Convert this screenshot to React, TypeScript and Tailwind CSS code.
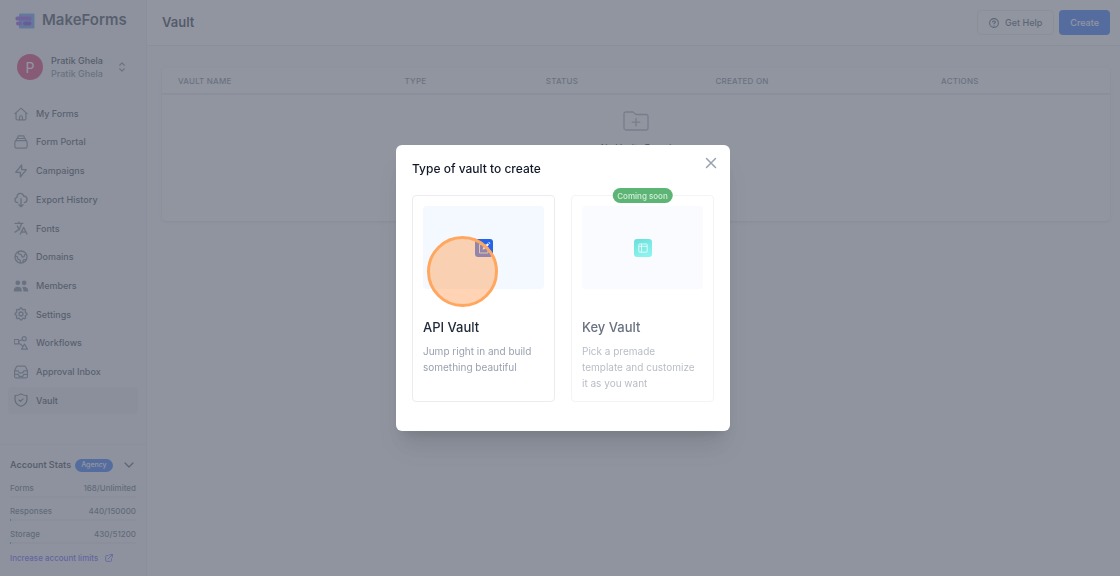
import type { ReactNode } from "react";
import {
  HiOutlineCloudDownload,
  HiOutlineCog,
  HiOutlineExternalLink,
  HiOutlineGlobe,
  HiOutlineLightningBolt,
  HiOutlineSelector,
  HiOutlineTranslate,
  HiUsers,
} from "react-icons/hi";

type StrokeIconProps = { className: string; width?: number; children: ReactNode };

function StrokeIcon({ className, width = 2, children }: StrokeIconProps) {
  return (
    <svg
      viewBox="0 0 24 24"
      fill="none"
      stroke="currentColor"
      strokeWidth={width}
      strokeLinecap="round"
      strokeLinejoin="round"
      className={className}
      aria-hidden="true"
    >
      {children}
    </svg>
  );
}

const navIcon = "size-[14px] shrink-0";
const heroIcon = "-m-px size-4 shrink-0";

const navItems: { label: string; icon: ReactNode; active?: boolean }[] = [
  {
    label: "My Forms",
    icon: (
      <StrokeIcon className={navIcon}>
        <path d="M1.500 11.500 12 2l10.500 9.500M3.500 10V20a2 2 0 0 0 2 2h13a2 2 0 0 0 2-2V10" />
        <path d="M9.500 22v-4.500a2.500 2.500 0 0 1 5 0V22" />
      </StrokeIcon>
    ),
  },
  {
    label: "Form Portal",
    icon: (
      <StrokeIcon className={navIcon}>
        <rect x="1.500" y="9.500" width="21" height="13" rx="3" />
        <path d="M3 10 5 6h14l2 4M6 6l1-4.500h10L18 6" />
      </StrokeIcon>
    ),
  },
  { label: "Campaigns", icon: <HiOutlineLightningBolt className={heroIcon} /> },
  { label: "Export History", icon: <HiOutlineCloudDownload className={heroIcon} /> },
  { label: "Fonts", icon: <HiOutlineTranslate className={heroIcon} /> },
  { label: "Domains", icon: <HiOutlineGlobe className={heroIcon} /> },
  { label: "Members", icon: <HiUsers className={heroIcon} /> },
  { label: "Settings", icon: <HiOutlineCog className={heroIcon} /> },
  {
    label: "Workflows",
    icon: (
      <StrokeIcon className={navIcon}>
        <rect x="0.500" y="6" width="7.500" height="7.500" />
        <circle cx="17.500" cy="4.500" r="3.500" />
        <path d="m8 9 6.500-3M8 12l7 5M18 14l5 8.500H13z" />
      </StrokeIcon>
    ),
  },
  {
    label: "Approval Inbox",
    icon: (
      <StrokeIcon className={navIcon}>
        <path d="M1 10h6l2 3.500h6l2-3.500h6M1 16h6l2 3.500h6l2-3.500h6" />
        <path d="M1 10v9.500a2.500 2.500 0 0 0 2.500 2.500h17a2.500 2.500 0 0 0 2.500-2.500V10l-3-6.500A2.500 2.500 0 0 0 17.700 2H6.300a2.500 2.500 0 0 0-2.300 1.500z" />
      </StrokeIcon>
    ),
  },
  {
    label: "Vault",
    active: true,
    icon: (
      <StrokeIcon className={navIcon}>
        <path d="M12 1.500C9 3.500 5.500 4.300 1.800 4.300V11c0 6 4.200 9.500 10.200 11.800C18 20.500 22.200 17 22.200 11V4.300C18.500 4.300 15 3.500 12 1.500z" />
        <path d="m8.500 12 2.500 2.500 4.500-4.500" />
      </StrokeIcon>
    ),
  },
];

const stats = [
  { label: "Forms", value: "168/Unlimited", percent: 0 },
  { label: "Responses", value: "440/150000", percent: 0.5 },
  { label: "Storage", value: "430/51200", percent: 1 },
];

function Logo() {
  return (
    <svg viewBox="0 0 20 16" className="h-4 w-5 shrink-0" aria-hidden="true">
      <rect x="4" y="0.500" width="15.500" height="15" rx="1" fill="#4f8df5" />
      <rect x="0.500" y="3.500" width="16" height="4" rx="1.500" fill="#7c3aed" />
      <rect x="1" y="8.500" width="6" height="4" rx="2" fill="#7c3aed" />
      <rect x="8" y="8.500" width="8.500" height="4" rx="2" fill="#5b21d6" />
    </svg>
  );
}

function Sidebar() {
  return (
    <aside className="flex w-[147px] shrink-0 flex-col border-r border-gray-200 bg-[#f3f4f6]">
      <div className="flex h-[41px] items-center gap-[7px] pl-[15px]">
        <Logo />
        <span className="text-[15px] font-semibold text-gray-800">MakeForms</span>
      </div>
      <button type="button" className="flex items-center pt-[13px] pr-[17px] pl-[17px] text-left">
        <span className="flex size-[26px] items-center justify-center rounded-full bg-[#db1a5a] text-[14px] text-white">
          P
        </span>
        <span className="ml-2 flex flex-1 flex-col text-[9px] leading-[13px] font-medium">
          <span className="text-gray-900">Pratik Ghela</span>
          <span className="text-gray-500">Pratik Ghela</span>
        </span>
        <HiOutlineSelector className="size-[14px] text-gray-500" />
      </button>
      <nav className="flex flex-1 flex-col justify-between px-2 pt-5 pb-[30px]">
        {navItems.map((item) => (
          <a
            key={item.label}
            href="#"
            className={
              item.active
                ? "flex h-[27px] items-center gap-2 rounded bg-[#e7e8eb] px-[6px] text-[9px] font-medium text-gray-900"
                : "flex h-[27px] items-center gap-2 rounded px-[6px] text-[9px] font-medium text-gray-800"
            }
          >
            <span className={item.active ? "text-gray-600" : "text-gray-500"}>{item.icon}</span>
            {item.label}
          </a>
        ))}
      </nav>
      <section className="border-t border-gray-200 px-[10px] pt-[11px] pb-3">
        <div className="flex h-[18px] items-center">
          <h2 className="text-[9px] font-semibold text-gray-800">Account Stats</h2>
          <span className="ml-1 flex h-[13px] items-center rounded-full bg-blue-600 px-[6px] text-[7px] font-medium text-white">
            Agency
          </span>
          <button type="button" aria-label="Toggle account stats" className="ml-auto pr-[1px]">
            <StrokeIcon className="size-3 text-gray-700" width={2.500}>
              <path d="m4 8 8 8 8-8" />
            </StrokeIcon>
          </button>
        </div>
        <div className="mt-2 flex flex-col gap-[7px]">
          {stats.map((stat) => (
            <div key={stat.label}>
              <div className="flex h-3 items-center justify-between text-[8px] font-medium text-gray-600">
                <span>{stat.label}</span>
                <span>{stat.value}</span>
              </div>
              <div className="mt-[2px] h-[2px] bg-gray-200">
                <div className="h-full bg-green-500" style={{ width: `${stat.percent}%` }} />
              </div>
            </div>
          ))}
        </div>
        <a href="#" className="mt-2 flex h-3 items-center gap-[6px] text-[8px] font-medium text-indigo-600">
          Increase account limits
          <HiOutlineExternalLink className="size-[10px]" />
        </a>
      </section>
    </aside>
  );
}

function VaultPage() {
  return (
    <div className="flex min-w-0 flex-1 flex-col bg-gray-50">
      <header className="flex h-[46px] items-center justify-between border-b border-gray-200 bg-white pr-[10px] pl-[15px]">
        <h1 className="text-[13px] font-semibold text-gray-900">Vault</h1>
        <div className="flex gap-[5px]">
          <button
            type="button"
            className="flex h-[25px] items-center gap-[6px] rounded border border-gray-200 bg-white px-[11px] text-[9px] font-medium text-gray-700"
          >
            <StrokeIcon className="size-[10px]" width={2.500}>
              <circle cx="12" cy="12" r="10.500" />
              <path d="M8.500 9.500C9 7.500 10.300 7 12 7c2 0 3.500 1 3.500 2.700 0 2.300-3.500 2.300-3.500 4.300M12 17.500v.1" />
            </StrokeIcon>
            Get Help
          </button>
          <button
            type="button"
            className="h-[25px] rounded bg-blue-600 px-[11px] text-[9px] font-medium text-white"
          >
            Create
          </button>
        </div>
      </header>
      <main className="pt-[22px] pr-[10px] pl-[15px]">
        <div className="overflow-hidden rounded bg-white shadow-sm">
          <table className="w-full table-fixed text-left">
            <thead>
              <tr className="h-[26px] border-b-2 border-gray-200 text-[8px] tracking-wide text-gray-500 uppercase">
                <th className="w-[23.9%] pl-4 font-medium">Vault name</th>
                <th className="w-[14.9%] pl-4 font-medium">Type</th>
                <th className="w-[17.9%] pl-4 font-medium">Status</th>
                <th className="w-[23.8%] pl-4 font-medium">Created on</th>
                <th className="pl-4 font-medium">Actions</th>
              </tr>
            </thead>
            <tbody>
              <tr>
                <td colSpan={5} className="h-[127px] pt-4 align-top">
                  <div className="flex flex-col items-center gap-[10px]">
                    <svg
                      viewBox="0 0 26 20"
                      fill="none"
                      stroke="currentColor"
                      strokeWidth="1.300"
                      strokeLinecap="round"
                      strokeLinejoin="round"
                      className="h-5 w-[26px] text-gray-400"
                      aria-hidden="true"
                    >
                      <path d="M1 3a2 2 0 0 1 2-2h7l3 2.500h10a2 2 0 0 1 2 2V17a2 2 0 0 1-2 2H3a2 2 0 0 1-2-2zM13 7.500v7.500M9.200 11.200h7.600" />
                    </svg>
                    <p className="text-[9px] font-medium text-gray-900">No Vaults Found</p>
                  </div>
                </td>
              </tr>
            </tbody>
          </table>
        </div>
      </main>
    </div>
  );
}

function EditTile() {
  return (
    <svg viewBox="0 0 18 18" className="size-[18px]" aria-hidden="true">
      <rect width="18" height="18" rx="3" fill="#2563eb" />
      <path d="M10.500 5.500h-6V14H13V8.500" fill="none" stroke="#dbeafe" strokeWidth="0.900" />
      <path d="m7.500 10.800.7-2.300 4.300-4.300 1.600 1.600-4.300 4.300zM13.200 3.500l.8-.6 1.500 1.500-.7.700z" fill="#eff6ff" />
    </svg>
  );
}

function TemplateTile() {
  return (
    <svg viewBox="0 0 18 18" className="size-[18px]" aria-hidden="true">
      <defs>
        <linearGradient id="tile-fill" x1="0" y1="0" x2="0.400" y2="1">
          <stop offset="0" stopColor="#2ed3cc" />
          <stop offset="1" stopColor="#5df0e6" />
        </linearGradient>
      </defs>
      <rect width="18" height="18" rx="3" fill="url(#tile-fill)" />
      <path d="M5.500 5h7a.7.700 0 0 1 .7.700v6.800a.7.700 0 0 1-.7.700h-7a.7.700 0 0 1-.7-.7V5.700a.7.700 0 0 1 .7-.7zM5 7.300h8.200M7.500 5v8.200" fill="none" stroke="#dffcf9" strokeWidth="0.900" />
    </svg>
  );
}

function VaultDialog() {
  return (
    <div
      role="dialog"
      aria-modal="true"
      aria-labelledby="dialog-title"
      className="w-[334px] rounded-md bg-white px-4 pt-[9px] pb-[29px] shadow-xl"
    >
      <div className="flex h-[29px] justify-between">
        <h2 id="dialog-title" className="pt-[6px] text-[12px] leading-[18px] font-medium text-gray-900">
          Type of vault to create
        </h2>
        <button type="button" aria-label="Close" className="-mr-[6px] size-[18px] text-gray-400">
          <StrokeIcon className="size-[18px]">
            <path d="M6 6l12 12M18 6 6 18" />
          </StrokeIcon>
        </button>
      </div>
      <div className="mt-3 grid grid-cols-2 gap-4">
        <button
          type="button"
          className="relative flex h-[207px] flex-col rounded border border-[#ececf0] p-[10px] text-left"
        >
          <span className="flex h-[83px] w-full shrink-0 items-center justify-center rounded bg-[#f4f9ff]">
            <EditTile />
          </span>
          <span className="mt-7 text-[13px] leading-5 font-medium text-gray-800">API Vault</span>
          <span className="mt-[6px] pr-[6px] text-[10px] leading-4 text-gray-400">
            Jump right in and build something beautiful
          </span>
          <span className="absolute top-10 left-[14px] size-[71px] rounded-full border-3 border-[#ffa75f] bg-[#ffa768]/50" />
        </button>
        <button
          type="button"
          disabled
          className="relative flex h-[207px] flex-col rounded border border-gray-100 p-[10px] text-left"
        >
          <span className="absolute -top-2 left-1/2 flex h-[15px] -translate-x-1/2 items-center rounded-full bg-[#5cb574] px-[5px] text-[8px] font-medium whitespace-nowrap text-[#d5eedb]">
            Coming soon
          </span>
          <span className="flex h-[83px] w-full shrink-0 items-center justify-center rounded bg-[#f9fbff]">
            <span className="opacity-70">
              <TemplateTile />
            </span>
          </span>
          <span className="mt-7 text-[13px] leading-5 font-medium text-gray-500">Key Vault</span>
          <span className="mt-[6px] pr-[6px] text-[10px] leading-4 text-[#b9bdc6]">
            Pick a premade template and customize it as you want
          </span>
        </button>
      </div>
    </div>
  );
}

export default function App() {
  return (
    <div className="relative flex min-h-screen font-['Inter',sans-serif] antialiased">
      <Sidebar />
      <VaultPage />
      <div className="fixed inset-0 flex items-center justify-center bg-[#6b7280]/75 pl-[6px]">
        <VaultDialog />
      </div>
    </div>
  );
}
